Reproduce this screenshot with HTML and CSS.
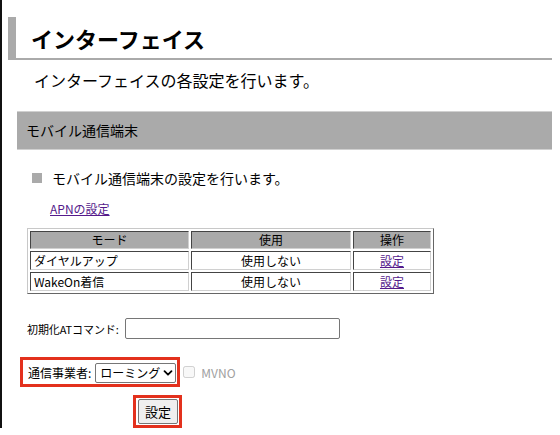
FILE: index.html
```html
<!DOCTYPE html>
<html lang="ja">
<head>
<meta charset="utf-8">
<title>インターフェイス</title>
<link rel="stylesheet" href="styles.css">
</head>
<body>
<div class="page">
  <h1 class="title">インターフェイス</h1>
  <p class="lead">インターフェイスの各設定を行います。</p>
  <div class="bar">モバイル通信端末</div>
  <div class="content">
    <div class="bullet"><span class="sq"></span><span>モバイル通信端末の設定を行います。</span></div>
    <div class="apn-row"><a class="apn" href="#">APNの設定</a></div>
    <table class="modes">
      <thead>
        <tr><th class="c-mode">モード</th><th class="c-use">使用</th><th class="c-op">操作</th></tr>
      </thead>
      <tbody>
        <tr><td>ダイヤルアップ</td><td class="center">使用しない</td><td class="center"><a class="link" href="#">設定</a></td></tr>
        <tr><td>WakeOn着信</td><td class="center">使用しない</td><td class="center"><a class="link" href="#">設定</a></td></tr>
      </tbody>
    </table>
  </div>
  <div class="form">
    <div class="atrow"><label class="lbl lbl-at">初期化ATコマンド:</label><input class="at-input" type="text"></div>
    <div class="carrier-row">
      <div class="mark carrier">
        <label class="lbl">通信事業者:</label>
        <span class="sel-wrap">
          <select class="sel"><option>ローミング</option></select>
          <svg class="sel-arrow" width="10" height="10" viewBox="0 0 10 10" aria-hidden="true"><path d="M1.5 3.2 L5 6.7 L8.5 3.2" fill="none" stroke="#000" stroke-width="1.8" stroke-linecap="round" stroke-linejoin="round"/></svg>
        </span>
      </div>
      <input class="chk" type="checkbox" disabled><span class="mvno">MVNO</span>
    </div>
    <div class="submit-row"><div class="mark submit"><button class="btn" type="button">設定</button></div></div>
  </div>
</div>
</body>
</html>
```

FILE: styles.css
```css
body {
  margin: 0;
  background: #fff;
  color: #000;
  font-family: "Noto Sans CJK JP", "Noto Sans", sans-serif;
}
.page {
  border-left: 2px solid #111;
  height: 428px;
  box-sizing: border-box;
  padding: 17px 8px 0 6px;
}
.title {
  margin: 0;
  height: 41px;
  border-left: 8px solid #aaa;
  border-bottom: 2px solid #aaa;
  padding-left: 15px;
  font-size: 22px;
  line-height: 42px;
  font-weight: bold;
}
.lead {
  margin: 10px 0 0 26px;
  font-size: 16px;
  line-height: 20px;
}
.bar {
  margin: 21px 0 0 9px;
  height: 37px;
  border-top: 1px solid #d0d0d0;
  border-bottom: 1px solid #d0d0d0;
  background: #aaa;
  font-size: 14px;
  line-height: 37px;
  padding-left: 9px;
}
.content {
  padding-left: 19px;
}
.bullet {
  margin-top: 18px;
  display: flex;
  align-items: center;
  gap: 10px;
  padding-left: 5px;
  font-size: 14px;
  line-height: 20px;
}
.sq {
  width: 10px;
  height: 10px;
  background: #aaa;
}
.apn-row {
  margin: 13px 0 0 23px;
  font-size: 12px;
  line-height: 16px;
}
.apn, .link {
  color: #551a8b;
}
.modes {
  margin-top: 11px;
  border-collapse: separate;
  border-spacing: 2px;
  border: 1px solid;
  border-color: #c8c8c8 #666 #666 #c8c8c8;
  font-size: 12px;
  table-layout: fixed;
  width: 407px;
}
.modes th, .modes td {
  border: 1px solid;
  border-color: #444 #d0d0d0 #d0d0d0 #444;
  padding: 0 3px;
  font-weight: normal;
}
.modes th {
  background: #aaa;
  height: 16px;
  line-height: 16px;
  text-align: center;
}
.modes td {
  height: 17px;
  line-height: 17px;
}
.c-mode { width: 151px; }
.c-use { width: 152px; }
.c-op { width: 70px; }
.center { text-align: center; }
.form {
  padding-left: 12px;
}
.atrow {
  margin: 24px 0 0 7px;
  display: flex;
  align-items: center;
  gap: 6px;
}
.lbl {
  font-size: 12px;
  line-height: 16px;
}
.lbl-at {
  font-size: 11px;
  letter-spacing: -0.1px;
}
.at-input {
  width: 215px;
  height: 21px;
  box-sizing: border-box;
  border: 1px solid #767676;
  border-radius: 2px;
  padding: 0 2px;
  margin: 0;
}
.carrier-row {
  margin-top: 18px;
  display: flex;
  align-items: center;
}
.mark {
  border: 3px solid #e3311d;
}
.carrier {
  display: flex;
  align-items: center;
  gap: 4px;
  padding: 3px 1px 1px 5px;
}
.sel-wrap {
  position: relative;
  display: flex;
}
.sel {
  -webkit-appearance: none;
  appearance: none;
  width: 81px;
  height: 20px;
  box-sizing: border-box;
  margin: 0;
  padding: 0 14px 0 4px;
  font-family: "Noto Sans CJK JP", sans-serif;
  font-size: 12px;
  line-height: 18px;
  color: #000;
  background: #fff;
  border: 1px solid #767676;
  border-radius: 2px;
}
.sel-arrow {
  position: absolute;
  right: 3px;
  top: 5px;
  pointer-events: none;
}
.chk {
  width: 12px;
  height: 12px;
  margin: 0 0 0 3px;
}
.mvno {
  margin-left: 6px;
  font-size: 12px;
  color: #a0a0a0;
}
.submit-row {
  margin-top: 8px;
  padding-left: 113px;
  display: flex;
}
.submit {
  padding: 1px 1px 1px 2px;
  display: flex;
}
.btn {
  width: 40px;
  height: 25px;
  margin: 0;
  padding: 0;
  font-family: "Noto Sans CJK JP", sans-serif;
  font-size: 13px;
  color: #000;
  background: #efefef;
  border: 1px solid #767676;
  border-radius: 2px;
}
```
